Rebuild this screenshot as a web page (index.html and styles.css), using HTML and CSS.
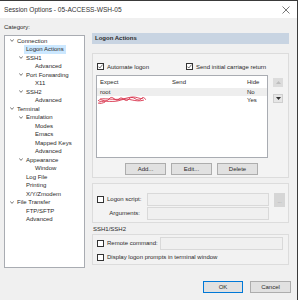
FILE: index.html
```html
<!DOCTYPE html>
<html lang="en">
<head>
    <meta charset="UTF-8">
    <title>Session Options - 05-ACCESS-WSH-05</title>
    <link rel="stylesheet" href="styles.css">
</head>
<body>
    <div class="window">
        <div class="titlebar">
            <span class="title">Session Options - 05-ACCESS-WSH-05</span>
            <svg class="close" width="8" height="8" viewBox="0 0 8 8"><path d="M0.5 0.5L7.5 7.5M7.5 0.5L0.5 7.5" stroke="#555" stroke-width="0.8"/></svg>
        </div>

        <div class="main">
            <div class="left">
                <div class="cat-label">Category:</div>
                <div class="tree">
                    <div class="node lv0 open"><i class="chev"></i><span>Connection</span></div>
                    <div class="node lv1"><i class="chev"></i><span class="selected">Logon Actions</span></div>
                    <div class="node lv1 open"><i class="chev"></i><span>SSH1</span></div>
                    <div class="node lv2"><i class="chev"></i><span>Advanced</span></div>
                    <div class="node lv1 open"><i class="chev"></i><span>Port Forwarding</span></div>
                    <div class="node lv2"><i class="chev"></i><span>X11</span></div>
                    <div class="node lv1 open"><i class="chev"></i><span>SSH2</span></div>
                    <div class="node lv2"><i class="chev"></i><span>Advanced</span></div>
                    <div class="node lv0 open"><i class="chev"></i><span>Terminal</span></div>
                    <div class="node lv1 open"><i class="chev"></i><span>Emulation</span></div>
                    <div class="node lv2"><i class="chev"></i><span>Modes</span></div>
                    <div class="node lv2"><i class="chev"></i><span>Emacs</span></div>
                    <div class="node lv2"><i class="chev"></i><span>Mapped Keys</span></div>
                    <div class="node lv2"><i class="chev"></i><span>Advanced</span></div>
                    <div class="node lv1 open"><i class="chev"></i><span>Appearance</span></div>
                    <div class="node lv2"><i class="chev"></i><span>Window</span></div>
                    <div class="node lv1"><i class="chev"></i><span>Log File</span></div>
                    <div class="node lv1"><i class="chev"></i><span>Printing</span></div>
                    <div class="node lv1"><i class="chev"></i><span>X/Y/Zmodem</span></div>
                    <div class="node lv0 open"><i class="chev"></i><span>File Transfer</span></div>
                    <div class="node lv1"><i class="chev"></i><span>FTP/SFTP</span></div>
                    <div class="node lv1"><i class="chev"></i><span>Advanced</span></div>
                </div>
            </div>

            <div class="right">
                <div class="section-head">Logon Actions</div>

                <div class="group g-actions">
                    <div class="check-row">
                        <label class="check"><span class="box on"></span>Automate logon</label>
                        <label class="check cr"><span class="box on"></span>Send initial carriage return</label>
                    </div>
                    <div class="list-row">
                        <div class="list">
                            <div class="list-head">
                                <span class="c-exp">Expect</span><span class="c-send">Send</span><span class="c-hide">Hide</span>
                            </div>
                            <div class="list-item current">
                                <span class="c-exp">root</span><span class="c-send"></span><span class="c-hide">No</span>
                            </div>
                            <div class="list-item">
                                <span class="c-exp">
                                    <svg class="scribble" width="50" height="9" viewBox="0 0 50 9"><path d="M1 5C4 1 8 8 12 3S18 7 22 3S28 8 32 3S40 7 44 3S48 5 49 3M2 6C8 4 16 7 24 4S38 7 47 4M3 3C10 2 20 5 30 2S42 4 46 2M1 7C3 8 6 7 8 6" fill="none" stroke="#d8304a" stroke-width="0.9"/></svg>
                                </span><span class="c-send"></span><span class="c-hide">Yes</span>
                            </div>
                        </div>
                        <div class="arrows">
                            <div class="arrow up"><svg width="5" height="3" viewBox="0 0 5 3"><path d="M0 3L2.5 0L5 3Z" fill="#bdbdbd"/></svg></div>
                            <div class="arrow down"><svg width="5" height="3" viewBox="0 0 5 3"><path d="M0 0L2.5 3L5 0Z" fill="#333"/></svg></div>
                        </div>
                    </div>
                    <div class="btn-row">
                        <button class="btn">Add...</button>
                        <button class="btn">Edit...</button>
                        <button class="btn">Delete</button>
                    </div>
                </div>

                <div class="group g-script">
                    <div class="field-row">
                        <label class="check lbl"><span class="box"></span>Logon script:</label>
                        <div class="field"></div>
                        <div class="browse">...</div>
                    </div>
                    <div class="field-row args">
                        <div class="lbl end">Arguments:</div>
                        <div class="field"></div>
                    </div>
                </div>

                <div class="group-title">SSH1/SSH2</div>
                <div class="group g-ssh">
                    <div class="field-row remote">
                        <label class="check lbl wide"><span class="box"></span>Remote command:</label>
                        <div class="field long"></div>
                    </div>
                    <label class="check prompts"><span class="box"></span>Display logon prompts in terminal window</label>
                </div>
            </div>
        </div>

        <div class="footer">
            <button class="btn ok">OK</button>
            <button class="btn cancel">Cancel</button>
        </div>
    </div>
</body>
</html>
```

FILE: styles.css
```css
* {
    margin: 0;
    padding: 0;
    box-sizing: border-box;
}

body {
    font-family: 'Liberation Sans', Arial, sans-serif;
    font-size: 6px;
    color: #2a2a2a;
    background: #f0f0f0;
}

.window {
    width: 298px;
    height: 300px;
    background: #f0f0f0;
    border-top: 1px solid #3a3a3a;
    border-right: 1px solid #3a3a3a;
}

/* title bar */
.titlebar {
    height: 17px;
    background: #fff;
    display: flex;
    align-items: center;
    justify-content: space-between;
    padding: 0 7px 0 4px;
}

.title {
    font-size: 6.6px;
    color: #333;
}

/* layout */
.main {
    display: flex;
    gap: 7px;
    padding-left: 4px;
}

.left {
    width: 81px;
}

.cat-label {
    height: 17px;
    padding-top: 4px;
    line-height: 11px;
}

.tree {
    height: 233px;
    background: #fff;
    border: 1px solid #a9acb2;
    padding-top: 0.5px;
}

.node {
    display: flex;
    align-items: center;
    height: 8.5px;
    line-height: 8.5px;
    white-space: nowrap;
}

.node.lv0 { padding-left: 4px; }
.node.lv1 { padding-left: 13px; }
.node.lv2 { padding-left: 22px; }

.chev {
    width: 7px;
    height: 8px;
    flex: none;
}

.node.open .chev {
    background: no-repeat 0.5px 2.5px / 4px 3px url("data:image/svg+xml,%3Csvg xmlns='http://www.w3.org/2000/svg' viewBox='0 0 4 3'%3E%3Cpath d='M0.3 0.4L2 2.4L3.7 0.4' fill='none' stroke='%23555' stroke-width='0.8'/%3E%3C/svg%3E");
}

.node span {
    padding: 0 1px;
}

.node .selected {
    background: #cce8ff;
    margin-left: -1px;
    padding: 0 2px;
}

.right {
    width: 197px;
    padding-top: 15px;
}

.section-head {
    height: 11px;
    line-height: 11px;
    background: #c8d4e2;
    font-weight: bold;
    padding-left: 3px;
}

/* group boxes */
.group {
    border: 1px solid #dcdcdc;
    background: #f3f3f3;
}

.g-actions {
    margin-top: 9px;
    height: 125px;
    padding: 9px 3px 0 3px;
}

.check {
    display: flex;
    align-items: center;
    gap: 3px;
    white-space: nowrap;
}

.box {
    width: 7px;
    height: 7px;
    border: 1px solid #333;
    background: #fff;
    flex: none;
}

.box.on {
    background: #fff no-repeat center / 5px 5px url("data:image/svg+xml,%3Csvg xmlns='http://www.w3.org/2000/svg' viewBox='0 0 5 5'%3E%3Cpath d='M0.4 2.6L1.8 4L4.6 0.6' fill='none' stroke='%23333' stroke-width='0.7'/%3E%3C/svg%3E");
}

.check-row {
    display: flex;
    height: 7px;
    padding-left: 1px;
}

.check-row .cr {
    margin-left: 37px;
}

.list-row {
    display: flex;
    gap: 5px;
    margin-top: 5px;
}

.list {
    width: 172px;
    height: 83px;
    background: #fff;
    border: 1px solid #a9acb2;
}

.list-head,
.list-item {
    display: flex;
    line-height: 8px;
    white-space: nowrap;
}

.list-head {
    height: 12px;
    line-height: 12px;
}

.list-item {
    height: 8px;
}

.list-item.current {
    background: #eeeeee;
}

.c-exp {
    width: 71px;
    padding-left: 3px;
    display: flex;
    align-items: center;
}

.c-send {
    width: 75px;
    padding-left: 4px;
}

.c-hide {
    padding-left: 4px;
}

.scribble {
    margin-left: -3px;
}

.arrows {
    display: flex;
    flex-direction: column;
    gap: 7px;
    padding-top: 3px;
}

.arrow {
    width: 10px;
    height: 9px;
    display: flex;
    align-items: center;
    justify-content: center;
}

.arrow.up {
    background: #dcdcdc;
}

.arrow.down {
    background: #e6e6e6;
    border: 1px solid #cfcfcf;
}

.btn-row {
    display: flex;
    justify-content: center;
    gap: 5px;
    margin-top: 5px;
    padding-left: 2px;
}

.btn {
    height: 12px;
    width: 41px;
    font-family: inherit;
    font-size: 6px;
    color: #2a2a2a;
    background: #e1e1e1;
    border: 1px solid #adadad;
}

/* script group */
.g-script {
    margin-top: 5px;
    height: 40px;
    padding: 9px 3px 0 4px;
}

.field-row {
    display: flex;
    align-items: center;
    height: 13px;
    line-height: 13px;
}

.field-row.args {
    margin-top: 1px;
}

.lbl {
    width: 50px;
    height: 13px;
    flex: none;
}

.lbl.end {
    text-align: right;
    padding-right: 7px;
}

.lbl.wide {
    width: 63px;
}

.field {
    height: 13px;
    width: 122px;
    border: 1px solid #d9d9d9;
    background: #f0f0f0;
}

.field.long {
    width: 123px;
}

.browse {
    width: 11px;
    height: 14px;
    margin-left: 5px;
    background: #d6d6d6;
    color: #9a9a9a;
    font-size: 5px;
    text-align: center;
    line-height: 16px;
}

.group-title {
    margin-top: 2px;
    line-height: 9px;
    height: 9px;
    padding-left: 1px;
}

.g-ssh {
    height: 31px;
    padding: 2px 3px 0 4px;
    background: #f2f2f2;
}

.remote {
    height: 13px;
}

.prompts {
    margin-top: 2px;
    height: 10px;
}

/* dialog buttons */
.footer {
    display: flex;
    justify-content: flex-end;
    gap: 7px;
    padding: 13px 6px 0 0;
}

.btn.ok {
    width: 40px;
    border-color: #0078d7;
}
```
